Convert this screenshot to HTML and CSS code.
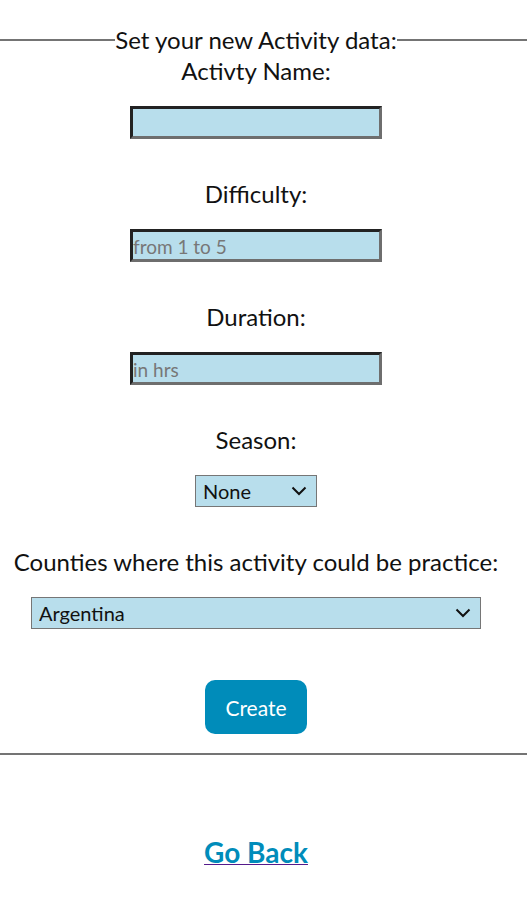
FILE: index.html
```html
<!DOCTYPE html>
<html lang="en">
<head>
<meta charset="utf-8">
<title>Create Activity</title>
<link rel="stylesheet" href="styles.css">
</head>
<body>
<form class="form">
  <fieldset class="box">
    <legend class="legend">Set your new Activity data:</legend>
    <div class="field">
      <label class="label" for="name">Activty Name:</label>
      <input class="input" id="name" type="text">
    </div>
    <div class="field">
      <label class="label" for="diff">Difficulty:</label>
      <input class="input" id="diff" type="text" placeholder="from 1 to 5">
    </div>
    <div class="field">
      <label class="label" for="dur">Duration:</label>
      <input class="input" id="dur" type="text" placeholder="in hrs">
    </div>
    <div class="field">
      <label class="label" for="season">Season:</label>
      <span class="select-wrap">
        <select class="select select-season" id="season">
          <option>None</option>
          <option>Summer</option>
          <option>Autumn</option>
          <option>Winter</option>
          <option>Spring</option>
        </select>
        <svg class="chevron" width="16" height="10" viewBox="0 0 16 10" aria-hidden="true"><path d="M1.5 1.5 L8 8 L14.5 1.5" fill="none" stroke="#111" stroke-width="2"/></svg>
      </span>
    </div>
    <div class="field field-last">
      <label class="label" for="countries">Counties where this activity could be practice:</label>
      <span class="select-wrap">
        <select class="select select-countries" id="countries">
          <option>Argentina</option>
        </select>
        <svg class="chevron" width="16" height="10" viewBox="0 0 16 10" aria-hidden="true"><path d="M1.5 1.5 L8 8 L14.5 1.5" fill="none" stroke="#111" stroke-width="2"/></svg>
      </span>
    </div>
    <button class="create" type="button">Create</button>
  </fieldset>
</form>
<div class="back-wrap">
  <a class="back-link" href="#"><span class="back">Go Back</span></a>
</div>
</body>
</html>
```
FILE: styles.css
```css
html, body {
  margin: 0;
  padding: 0;
  background: #fff;
}
body {
  font-family: Lato, "Noto Sans", sans-serif;
  color: #111;
}
.form {
  margin: 0;
  padding-top: 26px;
}
.box {
  margin: 0;
  border: none;
  border-top: 2px solid #747474;
  border-bottom: 2px solid #747474;
  padding: 3px 15px 19px 0;
  display: flex;
  flex-direction: column;
  align-items: center;
}
.legend {
  margin: 0 auto;
  padding: 0;
  font-size: 24px;
  line-height: 28px;
  text-align: center;
}
.field {
  display: flex;
  flex-direction: column;
  align-items: center;
  gap: 21px;
  margin-bottom: 41px;
}
.field-last {
  margin-bottom: 51px;
}
.label {
  font-size: 24px;
  line-height: 28px;
}
.input {
  box-sizing: border-box;
  width: 252px;
  height: 33px;
  padding: 2px 0 0;
  border: 3px solid #222;
  border-right-color: #6e6e6e;
  border-bottom-color: #6e6e6e;
  background: #b8deec;
  font-family: inherit;
  font-size: 19px;
  color: #111;
}
.input::placeholder {
  color: #777;
}
.select-wrap {
  position: relative;
  display: inline-block;
  line-height: 0;
}
.select {
  box-sizing: border-box;
  height: 32px;
  border: 1px solid #767676;
  border-radius: 0;
  background-color: #b8deec;
  font-family: inherit;
  font-size: 20px;
  color: #111;
  padding: 0 30px 0 7px;
  appearance: none;
  -webkit-appearance: none;
}
.select-season {
  width: 122px;
}
.select-countries {
  width: 450px;
}
.chevron {
  position: absolute;
  right: 10px;
  top: 11px;
  pointer-events: none;
}
.create {
  width: 102px;
  height: 54px;
  border: none;
  border-radius: 10px;
  background: #008cba;
  color: #fff;
  font-family: inherit;
  font-size: 21px;
  cursor: pointer;
}
.back-wrap {
  margin-top: 80px;
  padding-right: 15px;
  text-align: center;
}
.back-link {
  color: #551a8b;
  text-decoration: underline;
  text-decoration-color: #551a8b;
}
.back {
  color: #008cba;
  font-weight: bold;
  font-size: 28px;
  line-height: 34px;
}
```
